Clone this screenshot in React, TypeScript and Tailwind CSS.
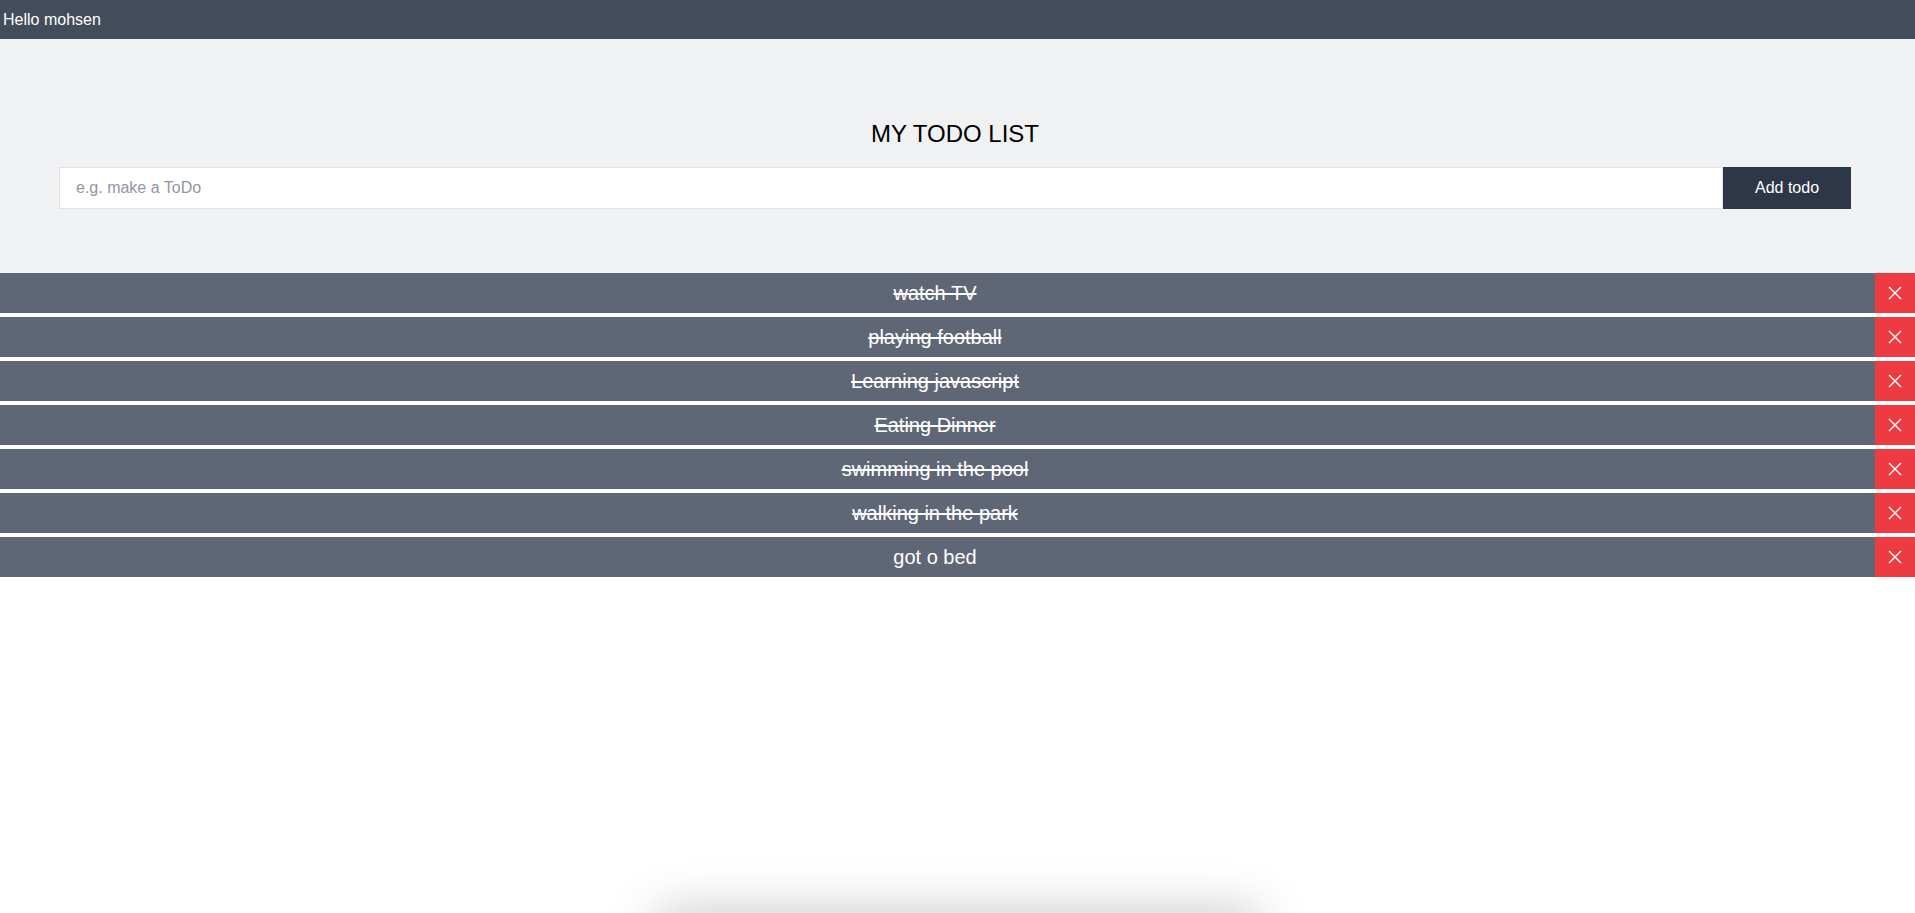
import React, { useState } from 'react';

interface Todo {
  id: number;
  text: string;
  done: boolean;
}

const initialTodos: Todo[] = [
  { id: 1, text: 'watch TV', done: true },
  { id: 2, text: 'playing football', done: true },
  { id: 3, text: 'Learning javascript', done: true },
  { id: 4, text: 'Eating Dinner', done: true },
  { id: 5, text: 'swimming in the pool', done: true },
  { id: 6, text: 'walking in the park', done: true },
  { id: 7, text: 'got o bed', done: false },
];

function CloseIcon() {
  return (
    <svg width="14" height="14" viewBox="0 0 14 14" fill="none">
      <path d="M1.5 1.5L12.5 12.5M12.5 1.5L1.5 12.5" stroke="white" strokeWidth="1.4" strokeLinecap="square" />
    </svg>
  );
}

export default function App() {
  const [todos, setTodos] = useState<Todo[]>(initialTodos);
  const [text, setText] = useState('');

  const addTodo = () => {
    if (!text.trim()) return;
    setTodos([...todos, { id: Date.now(), text: text.trim(), done: false }]);
    setText('');
  };

  const toggle = (id: number) => {
    setTodos(todos.map((t) => (t.id === id ? { ...t, done: !t.done } : t)));
  };

  const remove = (id: number) => {
    setTodos(todos.filter((t) => t.id !== id));
  };

  return (
    <div className="min-h-screen bg-white font-['Liberation_Sans',Arial,sans-serif]">
      <header className="h-[39px] flex items-center px-[3px] bg-[#434c5a] text-white text-base">
        Hello mohsen
      </header>

      <section className="bg-[#f0f1f3] pt-[79px] pb-[64px] pl-[59px] pr-[64px]">
        <h1 className="h-8 leading-8 text-2xl text-black text-center mb-[17px]">MY TODO LIST</h1>
        <div className="flex h-[42px]">
          <input
            value={text}
            onChange={(e) => setText(e.target.value)}
            onKeyDown={(e) => e.key === 'Enter' && addTodo()}
            placeholder="e.g. make a ToDo"
            className="flex-1 h-full bg-white border border-[#e2e4e8] px-4 text-base text-gray-700 placeholder:text-[#9097a2] outline-none"
          />
          <button
            onClick={addTodo}
            className="w-32 h-full bg-[#2d3748] text-white text-base"
          >
            Add todo
          </button>
        </div>
      </section>

      <ul>
        {todos.map((todo) => (
          <li key={todo.id} className="flex h-10 mb-1 bg-[#5f6675]">
            <span
              onClick={() => toggle(todo.id)}
              className={`flex-1 flex items-center justify-center pr-[5px] text-xl text-white cursor-pointer ${
                todo.done ? 'line-through' : ''
              }`}
            >
              {todo.text}
            </span>
            <button
              onClick={() => remove(todo.id)}
              className="w-10 h-full flex items-center justify-center bg-[#ee3b41]"
            >
              <CloseIcon />
            </button>
          </li>
        ))}
      </ul>

      {/* floating panel sitting just below the fold */}
      <div className="fixed bottom-0 left-1/2 -translate-x-1/2 translate-y-full w-[600px] h-10 bg-white shadow-[0_0_50px_rgba(0,0,0,0.25)]" />
    </div>
  );
}
